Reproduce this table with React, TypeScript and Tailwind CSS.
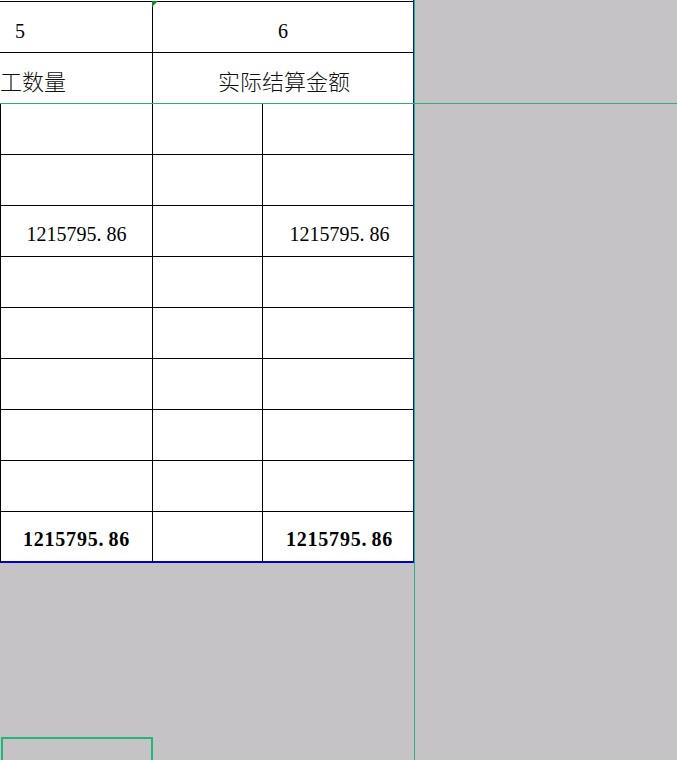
import React from 'react';

const serif = "font-['Liberation_Serif',serif]";
const cjk = "font-['Noto_Sans_CJK_SC',sans-serif]";

const Amount: React.FC<{ bold?: boolean }> = ({ bold }) => (
  <span
    className={`${serif} text-[20px] text-black ${
      bold ? 'font-bold tracking-[0.8px]' : ''
    }`}
  >
    1215795<span className="inline-block w-[10px]">.</span>86
  </span>
);

const rows: Array<'empty' | 'value' | 'total'> = [
  'empty',
  'empty',
  'value',
  'empty',
  'empty',
  'empty',
  'empty',
  'empty',
  'total'
];

export default function App() {
  return (
    <div className="w-[677px] h-[760px] bg-[#c5c3c6] flex flex-col overflow-hidden">
      {/* frozen header pane */}
      <div className="flex h-[103px] shrink-0">
        <div className="w-[413px] bg-white flex flex-col pt-px">
          <div className="flex h-[52px] border-y border-black">
            <div className="w-[153px] border-r border-black flex items-center pl-[15px] pt-[7px]">
              <span className={`${serif} text-[20px] text-black`}>5</span>
            </div>
            <div className="relative flex-1 flex items-center justify-center pt-[7px]">
              <svg className="absolute -left-px -top-px" width="6" height="6" viewBox="0 0 6 6">
                <polygon points="0,0 6,0 0,6" fill="#0f8a1e" />
              </svg>
              <span className={`${serif} text-[20px] text-black`}>6</span>
            </div>
          </div>
          <div className="flex h-[50px]">
            <div className="w-[153px] border-r border-black flex items-center pt-[4px]">
              <span className={`${cjk} text-[22px] font-light leading-none text-[#111]`}>工数量</span>
            </div>
            <div className="flex-1 flex items-center justify-center pt-[4px] pl-[2px]">
              <span className={`${cjk} text-[22px] font-light leading-none text-[#111]`}>实际结算金额</span>
            </div>
          </div>
        </div>
        <div className="w-px bg-[#1010c8]" />
        <div className="w-px bg-[#27b57c]" />
        <div className="flex-1" />
      </div>

      <div className="h-px bg-[#2fae7c] shrink-0" />

      {/* body pane */}
      <div className="flex flex-1">
        <div className="w-[414px] flex flex-col">
          <div className="flex">
            <div className="w-[413px] bg-white border-l border-black flex flex-col">
              {rows.map((kind, i) => (
                <div
                  key={i}
                  className={`flex h-[51px] ${
                    kind === 'total' ? 'border-b-2 border-[#0000cc]' : 'border-b border-black'
                  }`}
                >
                  <div className="w-[152px] border-r border-black flex items-center justify-center pt-[5px]">
                    {kind === 'value' && <Amount />}
                    {kind === 'total' && <Amount bold />}
                  </div>
                  <div className="w-[110px] border-r border-black" />
                  <div className="flex-1 flex items-center justify-center pt-[5px] pl-[3px]">
                    {kind === 'value' && <Amount />}
                    {kind === 'total' && <Amount bold />}
                  </div>
                </div>
              ))}
            </div>
            <div className="w-px bg-[#1010c8]" />
          </div>
          <div className="flex-1 flex flex-col justify-end">
            <div className="ml-px w-[152px] h-[23px] border-2 border-b-0 border-[#21b67a]" />
          </div>
        </div>
        <div className="w-px bg-[#27b57c]" />
        <div className="flex-1" />
      </div>
    </div>
  );
}
